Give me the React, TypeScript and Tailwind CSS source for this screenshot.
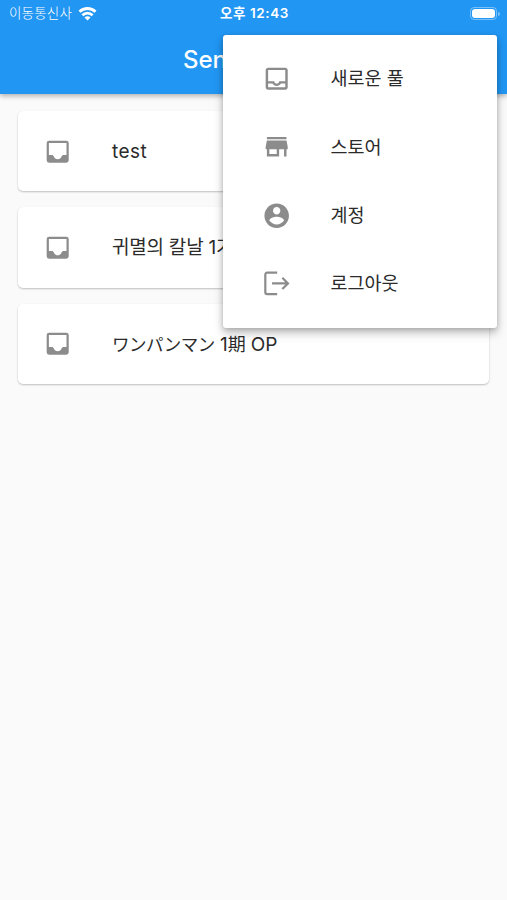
import React from 'react';

const ICONS = {
  inbox: 'M19 3H5a2 2 0 0 0-2 2v14a2 2 0 0 0 2 2h14a2 2 0 0 0 2-2V5a2 2 0 0 0-2-2zm.2 11.6h-3.1l-1.1 1.6c-.3 1.2-1.4 2-3 2s-2.7-.8-3-2l-1.1-1.6H4.800V4.800h14.400z',
  inboxOutline: 'M19 3H5c-1.1 0-2 .9-2 2v14c0 1.1.9 2 2 2h14c1.1 0 2-.9 2-2V5c0-1.1-.9-2-2-2zm0 16H5v-3h3.56c.69 1.19 1.97 2 3.45 2s2.75-.81 3.45-2H19v3zm0-5h-4.99c0 1.1-.9 2-2 2s-2-.9-2-2H5V5h14v9z',
  store: 'M20 4H4v2h16V4zm1 10v-2l-1-5H4l-1 5v2h1v6h10v-6h4v6h2v-6h1zm-9 4H6v-4h6v4z',
  account: 'M12 2C6.48 2 2 6.48 2 12s4.48 10 10 10 10-4.48 10-10S17.52 2 12 2zm0 3c1.66 0 3 1.34 3 3s-1.34 3-3 3-3-1.34-3-3 1.34-3 3-3zm0 14.2c-2.5 0-4.71-1.28-6-3.22.03-1.99 4-3.08 6-3.08 1.99 0 5.97 1.09 6 3.08-1.29 1.94-3.5 3.22-6 3.22z',
};

type IconName = keyof typeof ICONS | 'logout';

function Icon({ name }: { name: IconName }) {
  if (name === 'logout') {
    return (
      <svg viewBox="0 0 24 24" className="size-[29.4px] shrink-0" fill="none" stroke="currentColor" strokeWidth="1.8">
        <path d="M12.4 3H4.2a1.5 1.5 0 0 0-1.5 1.5v14.5a1.5 1.5 0 0 0 1.5 1.5H12.4M8.2 11.8h13M16.6 7.2l4.6 4.6-4.6 4.6" />
      </svg>
    );
  }
  return (
    <svg viewBox="0 0 24 24" className="size-[29.4px] shrink-0" fill="currentColor">
      <path d={ICONS[name]} />
    </svg>
  );
}

const pools = [
  { id: 1, name: <span className="tracking-[0.5px]">test</span> },
  { id: 2, name: <span className="tracking-[-0.2px]">귀멸의 칼날 1기</span> },
  {
    id: 3,
    name: (
      <>
        <span className="text-[17.5px] tracking-[-0.5px]">ワンパンマン</span>
        <span className="tracking-[-0.1px]"> 1<span className="text-[18px]">期</span> OP</span>
      </>
    ),
  },
];

const menu: { icon: IconName; label: string }[] = [
  { icon: 'inboxOutline', label: '새로운 풀' },
  { icon: 'store', label: '스토어' },
  { icon: 'account', label: '계정' },
  { icon: 'logout', label: '로그아웃' },
];

function StatusBar() {
  return (
    <div className="grid h-[27px] grid-cols-3 items-center pl-[9px] pr-[7px] text-[13.5px] leading-none">
      <div className="flex items-center gap-[6px]">
        <span className="whitespace-nowrap font-light tracking-[0.2px]">이동통신사</span>
        <svg viewBox="0 0 18 14" className="h-[14px] w-[19px]" fill="none" stroke="currentColor" strokeWidth="2.8">
          <path d="M1 4.8a11.3 11.3 0 0 1 16 0M3.9 8.2a7.2 7.2 0 0 1 10.2 0" />
          <path d="M9 13.6l-3-3.1a4.200 4.200 0 0 1 6 0z" fill="currentColor" stroke="none" />
        </svg>
      </div>
      <span className="whitespace-nowrap text-center font-semibold tracking-[0.6px]">오후 12:43</span>
      <div className="flex items-center justify-end gap-px">
        <div className="h-[13px] w-[27px] rounded-[4px] border border-white/40 p-[1px]">
          <div className="h-full rounded-[3px] bg-white" />
        </div>
        <div className="h-1 w-[2px] rounded-r bg-white/40" />
      </div>
    </div>
  );
}

export default function App() {
  return (
    <div className="relative h-[900px] w-[507px] overflow-hidden bg-[#fafafa] font-[Inter,'Noto_Sans_CJK_KR',sans-serif] text-[#2b2b2b]">
      <header className="relative h-[94px] bg-[#2196f3] text-white shadow-[0_2px_5px_rgba(0,0,0,0.3)]">
        <StatusBar />
        <h1 className="flex h-[66px] items-center pl-[183px] text-[24px] font-medium">Sen</h1>
      </header>

      <main className="flex flex-col gap-[16px] px-[18px] pt-[17px]">
        {pools.map(({ id, name }) => (
          <div
            key={id}
            className="flex h-[80.4px] items-center gap-[39.5px] rounded-[5px] bg-white pl-[25px] shadow-[0_1px_2px_rgba(0,0,0,0.24)]"
          >
            <span className="flex text-[#8c8c8c]"><Icon name="inbox" /></span>
            <span className="whitespace-nowrap pt-[2px] text-[19px]">{name}</span>
          </div>
        ))}
      </main>

      {/* Popup menu */}
      <div className="absolute left-[223px] top-[35px] h-[293px] w-[274px] rounded-[3px] bg-white pt-[9.5px] shadow-[0_5px_10px_rgba(0,0,0,0.26),0_1px_5px_rgba(0,0,0,0.16)]">
        {menu.map(({ icon, label }) => (
          <div key={label} className="flex h-[68.4px] items-center gap-[39px] pl-[39px]">
            <span className="flex text-[#8c8c8c]"><Icon name={icon} /></span>
            <span className="whitespace-nowrap pt-[1px] text-[18.5px]">{label}</span>
          </div>
        ))}
      </div>
    </div>
  );
}
